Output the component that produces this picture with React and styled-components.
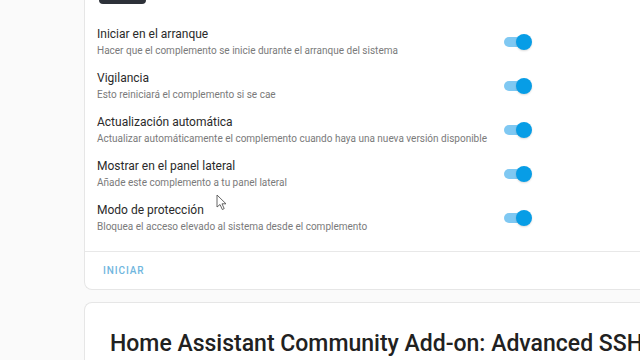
import React from "react";
import styled, { createGlobalStyle } from "styled-components";

const Global = createGlobalStyle`
  html, body { margin: 0; padding: 0; }
  body { background: #fafafa; font-family: Roboto, "Noto Sans", sans-serif; }
`;

const Page = styled.div`
  position: relative;
  width: 640px;
  height: 360px;
  overflow: hidden;
  background: #fafafa;
  padding-left: 84px;
  box-sizing: border-box;
`;

const Card = styled.section`
  background: #ffffff;
  border: 1px solid #e6e6e6;
  border-right: none;
  border-radius: 8px 0 0 8px;
  width: 580px;
  margin-top: ${(p) => p.$offset || 0}px;
  box-sizing: border-box;
`;

const Header = styled.div`
  padding: 0 14px;
`;

const DarkButton = styled.div`
  width: 47px;
  height: 30px;
  background: #2d3139;
  border-radius: 4px;
`;

const Options = styled.div`
  padding: 0 0 11px 12px;
  margin-top: 16px;
`;

const Row = styled.div`
  display: flex;
  align-items: center;
  width: 435px;
  height: 44px;
  box-sizing: border-box;
`;

const Texts = styled.div`
  flex: 1;
  display: flex;
  flex-direction: column;
  gap: 2px;
  white-space: nowrap;
`;

const Title = styled.div`
  font-size: 12px;
  line-height: 16px;
  color: #2a2a2a;
`;

const Desc = styled.div`
  font-size: 10px;
  line-height: 14px;
  color: #7a7a7a;
`;

const Toggle = styled.div`
  position: relative;
  width: 28px;
  height: 16px;
  flex: none;
`;

const Track = styled.div`
  position: absolute;
  left: 0;
  top: 3px;
  width: 24px;
  height: 10px;
  border-radius: 5px;
  background: #7fc8f2;
`;

const Thumb = styled.div`
  position: absolute;
  right: 0;
  top: 0;
  width: 16px;
  height: 16px;
  border-radius: 50%;
  background: #079de6;
  box-shadow: 0 1px 2px rgba(0, 0, 0, 0.15);
`;

const Actions = styled.div`
  border-top: 1px solid #e8e8e8;
  height: 37px;
  display: flex;
  align-items: center;
  padding-left: 18px;
`;

const TextButton = styled.span`
  font-size: 10px;
  font-weight: 500;
  letter-spacing: 0.9px;
  color: #6fb6de;
`;

const BigTitle = styled.h1`
  margin: 0;
  padding: 26px 0 0 25px;
  font-size: 23px;
  font-weight: 500;
  color: #212121;
  white-space: nowrap;
  line-height: 30px;
  height: 70px;
`;

const Cursor = styled.svg`
  position: absolute;
  left: 216px;
  top: 194px;
`;

const options = [
  ["Iniciar en el arranque", "Hacer que el complemento se inicie durante el arranque del sistema"],
  ["Vigilancia", "Esto reiniciará el complemento si se cae"],
  ["Actualización automática", "Actualizar automáticamente el complemento cuando haya una nueva versión disponible"],
  ["Mostrar en el panel lateral", "Añade este complemento a tu panel lateral"],
  ["Modo de protección", "Bloquea el acceso elevado al sistema desde el complemento"],
];

export default function App() {
  return (
    <Page>
      <Global />
      <Card $offset={-27}>
        <Header>
          <DarkButton />
        </Header>
        <Options>
          {options.map(([t, d]) => (
            <Row key={t}>
              <Texts>
                <Title>{t}</Title>
                <Desc>{d}</Desc>
              </Texts>
              <Toggle>
                <Track />
                <Thumb />
              </Toggle>
            </Row>
          ))}
        </Options>
        <Actions>
          <TextButton>INICIAR</TextButton>
        </Actions>
      </Card>
      <Card $offset={12}>
        <BigTitle>Home Assistant Community Add-on: Advanced SSH &amp; Web Terminal</BigTitle>
      </Card>
      <Cursor width="12" height="17" viewBox="0 0 12 17">
        <path d="M1 1 L1 13 L4 10.5 L6.3 15.5 L8.2 14.6 L6 9.8 L10 9.8 Z" fill="#fff" stroke="#555" strokeWidth="0.9" strokeLinejoin="round" />
      </Cursor>
    </Page>
  );
}
